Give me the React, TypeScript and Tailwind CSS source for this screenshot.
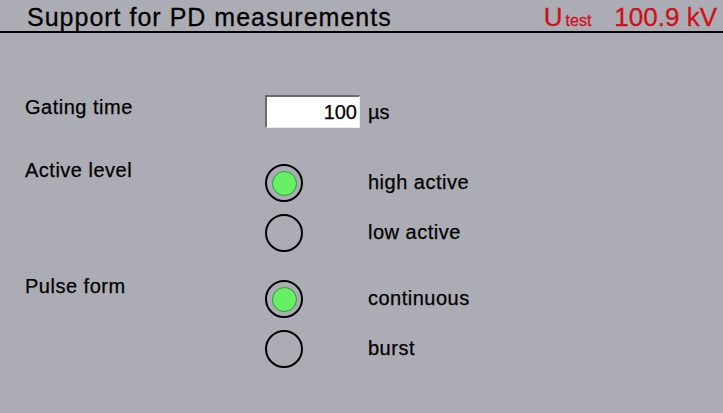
import React from "react";

const font = { fontFamily: '"Liberation Sans", Arial, sans-serif' };

function Radio({ on }: { on: boolean }) {
  return (
    <div className="w-[38px] h-[38px] rounded-full border-2 border-black flex items-center justify-center shrink-0">
      {on && <div className="w-[25px] h-[25px] rounded-full bg-[#66f066] border border-[#2e9a2e]" />}
    </div>
  );
}

function RadioGroup({ items }: { items: { label: string; on: boolean }[] }) {
  return (
    <div className="flex flex-col gap-[12px] pt-[6px]">
      {items.map((it) => (
        <div key={it.label} className="flex items-center gap-[65px]">
          <Radio on={it.on} />
          <span className="text-[20px] leading-[24px] tracking-[0.5px] text-black -mt-[3px] [-webkit-text-stroke:0.25px_black]">{it.label}</span>
        </div>
      ))}
    </div>
  );
}

const label = "w-[240px] text-[20px] leading-[24px] tracking-[0.5px] text-black [-webkit-text-stroke:0.25px_black]";

export default function App() {
  return (
    <div className="w-[723px] h-[413px] bg-[#acadb4] overflow-hidden" style={font}>
      <div className="h-[33px] border-b-2 border-black flex items-start justify-between pl-[27px] pr-[6px] pt-[3px]">
        <span className="text-[25px] leading-[28px] tracking-[1px] text-black [-webkit-text-stroke:0.3px_black]">Support for PD measurements</span>
        <div className="flex items-baseline text-[#d01018] [-webkit-text-stroke:0.3px_#d01018]">
          <span className="text-[26px] leading-[28px]">U</span>
          <span className="text-[16px] leading-[28px] ml-[3px]">test</span>
          <span className="text-[26px] leading-[28px] ml-[23px]">100.9 kV</span>
        </div>
      </div>

      <div className="pl-[25px] flex flex-col">
        <div className="flex mt-[62px]">
          <span className={label}>Gating time</span>
          <div className="flex items-center gap-[8px]">
            <div className="w-[95px] h-[33px] bg-white border-t-2 border-l-2 border-b border-r border-t-[#6a6a6a] border-l-[#6a6a6a] border-b-[#ececec] border-r-[#ececec] flex items-center justify-end pr-[2px]">
              <span className="text-[20px] leading-[24px] text-black [-webkit-text-stroke:0.25px_black]">100</span>
            </div>
            <span className="text-[20px] leading-[24px] text-black [-webkit-text-stroke:0.25px_black]">µs</span>
          </div>
        </div>

        <div className="flex mt-[30px]">
          <span className={label}>Active level</span>
          <RadioGroup items={[{ label: "high active", on: true }, { label: "low active", on: false }]} />
        </div>

        <div className="flex mt-[22px]">
          <span className={label}>Pulse form</span>
          <RadioGroup items={[{ label: "continuous", on: true }, { label: "burst", on: false }]} />
        </div>
      </div>
    </div>
  );
}
